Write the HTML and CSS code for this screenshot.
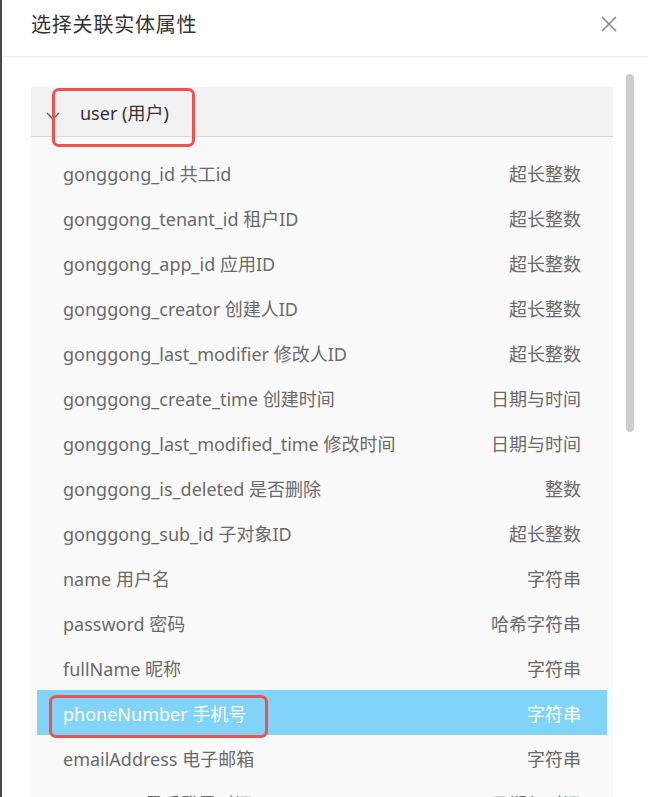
FILE: index.html
```html
<!DOCTYPE html>
<html lang="zh">
<head>
<meta charset="UTF-8">
<title>选择关联实体属性</title>
<link rel="stylesheet" href="styles.css">
</head>
<body>
<div class="dialogo">
  <div class="cabecera">
    <span class="titulo">选择关联实体属性</span>
    <svg class="cerrar" width="16" height="16" viewBox="0 0 16 16"><path d="M1 1L15 15M15 1L1 15" stroke="#888" stroke-width="1.6" fill="none"/></svg>
  </div>
  <div class="cuerpo">
    <div class="panel">
      <div class="grupo">
        <svg class="flecha" width="14" height="8" viewBox="0 0 14 8"><path d="M1 1L7 7L13 1" stroke="#555" stroke-width="1.3" fill="none"/></svg>
        <span>user (用户)</span>
        <div class="marca marca-grupo"></div>
      </div>
      <div class="lista">
        <div class="fila"><span>gonggong_id 共工id</span><span>超长整数</span></div>
        <div class="fila"><span>gonggong_tenant_id 租户ID</span><span>超长整数</span></div>
        <div class="fila"><span>gonggong_app_id 应用ID</span><span>超长整数</span></div>
        <div class="fila"><span>gonggong_creator 创建人ID</span><span>超长整数</span></div>
        <div class="fila"><span>gonggong_last_modifier 修改人ID</span><span>超长整数</span></div>
        <div class="fila"><span>gonggong_create_time 创建时间</span><span>日期与时间</span></div>
        <div class="fila"><span>gonggong_last_modified_time 修改时间</span><span>日期与时间</span></div>
        <div class="fila"><span>gonggong_is_deleted 是否删除</span><span>整数</span></div>
        <div class="fila"><span>gonggong_sub_id 子对象ID</span><span>超长整数</span></div>
        <div class="fila"><span>name 用户名</span><span>字符串</span></div>
        <div class="fila"><span>password 密码</span><span>哈希字符串</span></div>
        <div class="fila"><span>fullName 昵称</span><span>字符串</span></div>
        <div class="fila activa"><span>phoneNumber 手机号</span><span>字符串</span><div class="marca marca-fila"></div></div>
        <div class="fila"><span>emailAddress 电子邮箱</span><span>字符串</span></div>
        <div class="fila"><span>lastLogin 最后登录时间</span><span>日期与时间</span></div>
      </div>
    </div>
    <div class="barra"><div class="pulgar"></div></div>
  </div>
</div>
</body>
</html>
```

FILE: styles.css
```css
body, html {
  margin: 0;
  padding: 0;
  height: 100%;
  overflow: hidden;
  background: #fff;
  font-family: "Noto Sans", "Noto Sans CJK SC", sans-serif;
}
.dialogo {
  height: 100%;
  border-left: 2px solid #4a4a4a;
  box-sizing: border-box;
}
.cabecera {
  height: 57px;
  border-bottom: 1px solid #ececec;
  display: flex;
  align-items: center;
  justify-content: space-between;
  padding: 0 31px 10px 29px;
  box-sizing: border-box;
}
.titulo {
  font-size: 20px;
  letter-spacing: 0.8px;
  color: #333;
  font-family: "Noto Sans CJK SC", sans-serif;
}
.cerrar {
  margin-top: 2px;
}
.cuerpo {
  display: flex;
  align-items: flex-start;
  padding: 17px 0 0 29px;
  gap: 13px;
}
.panel {
  width: 582px;
  margin-top: 13px;
  background: #f9f9f9;
  flex-shrink: 0;
}
.grupo {
  position: relative;
  height: 49px;
  background: #f2f2f2;
  border-bottom: 1px solid #d6d6d6;
  display: flex;
  align-items: center;
  padding-left: 15px;
  font-size: 18px;
  color: #333;
}
.flecha {
  margin: 8px 20px 0 0;
}
.lista {
  padding: 13px 6px;
}
.fila {
  position: relative;
  height: 45px;
  display: flex;
  align-items: center;
  justify-content: space-between;
  padding: 0 26px;
  font-size: 18px;
  color: #6a6a6a;
}
.fila.activa {
  background: #81d3f8;
  color: #fff;
}
.marca {
  position: absolute;
  border: 3px solid #f24f4f;
  border-radius: 7px;
  box-sizing: border-box;
}
.marca-grupo {
  left: 21px;
  top: 1px;
  width: 143px;
  height: 59px;
}
.marca-fila {
  left: 12px;
  top: 5px;
  width: 219px;
  height: 43px;
}
.barra {
  width: 8px;
}
.pulgar {
  height: 358px;
  background: #cdcdcd;
  border-radius: 4px;
}
```
